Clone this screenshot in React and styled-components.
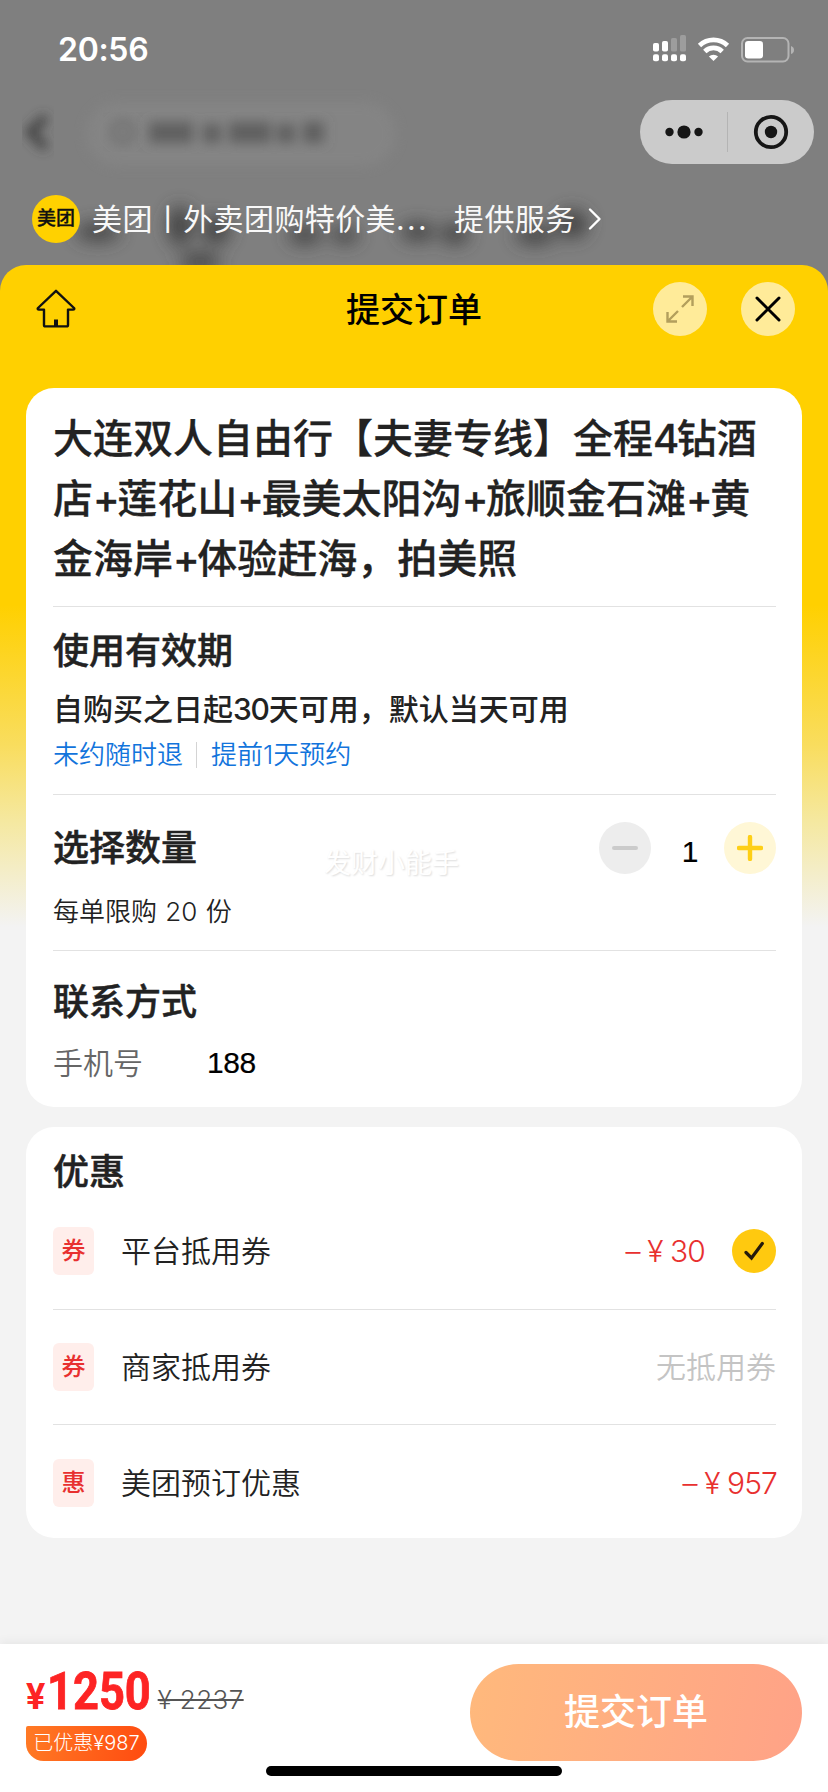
import React, { useState } from 'react'
import styled, { createGlobalStyle } from 'styled-components'

const coupons = [
  { id: 1, tag: '券', name: '平台抵用券', amount: '30', checked: true },
  { id: 2, tag: '券', name: '商家抵用券' },
  { id: 3, tag: '惠', name: '美团预订优惠', amount: '957' },
]

const App = () => {
  const [count, setCount] = useState(1)

  return (
    <>
      <GlobalStyle />
      <Page>
        <BlurredPage />
        <StatusBar>
          <Time>20:56</Time>
          <StatusIcons />
        </StatusBar>
        <CapsuleRow>
          <Capsule>
            <svg width="38" height="16" viewBox="0 0 38 16" fill="#161616">
              <circle cx="4.5" cy="8" r="4.2" />
              <circle cx="19" cy="8" r="6.6" />
              <circle cx="33.5" cy="8" r="4.2" />
            </svg>
            <CapsuleLine />
            <svg width="36" height="36" viewBox="0 0 36 36">
              <circle cx="18" cy="18" r="15.2" fill="none" stroke="#161616" strokeWidth="3.8" />
              <circle cx="18" cy="18" r="6.2" fill="#161616" />
            </svg>
          </Capsule>
        </CapsuleRow>
        <Provider>
          <Logo>美团</Logo>
          <ProviderName>美团丨外卖团购特价美<Dots>...</Dots></ProviderName>
          <span>提供服务</span>
          <svg width="14" height="24" viewBox="0 0 14 24" fill="none" stroke="#fff" strokeWidth="2.4">
            <path d="M2 2.5 L11.5 12 L2 21.5" strokeLinecap="round" strokeLinejoin="round" />
          </svg>
        </Provider>

        <Sheet>
          <Header>
            <HomeIcon />
            <HeaderTitle>提交订单</HeaderTitle>
            <HeaderButtons>
              <RoundButton>
                <svg width="30" height="30" viewBox="0 0 30 30" fill="none" stroke="#b39f5c" strokeWidth="2.4">
                  <path d="M18 2.5 H27.5 V12 M27 3 L17 13 M2.5 18 V27.5 H12 M3 27 L13 17" />
                </svg>
              </RoundButton>
              <RoundButton>
                <svg width="28" height="28" viewBox="0 0 28 28" fill="none" stroke="#000" strokeWidth="3">
                  <path d="M3 3 L25 25 M25 3 L3 25" strokeLinecap="round" />
                </svg>
              </RoundButton>
            </HeaderButtons>
          </Header>

          <Card>
            <ProductTitle>
              大连双人自由行【夫妻专线】全程<Narrow>4</Narrow>钻酒
              <br />
              店<Narrow>+</Narrow>莲花山<Narrow>+</Narrow>最美太阳沟<Narrow>+</Narrow>旅顺金石滩<Narrow>+</Narrow>黄
              <br />
              金海岸<Narrow>+</Narrow>体验赶海，拍美照
            </ProductTitle>
            <Section $height={188} $top={26}>
              <Heading>使用有效期</Heading>
              <Validity>自购买之日起<Days>30</Days>天可用，默认当天可用</Validity>
              <Rules>
                <span>未约随时退</span>
                <RuleLine />
                <span>提前1天预约</span>
              </Rules>
            </Section>
            <Section $height={156} $top={28}>
              <CountRow>
                <Heading>选择数量</Heading>
                <Watermark>发财小能手</Watermark>
                <Stepper>
                  <StepButton $color="#ededed" onClick={() => setCount(Math.max(1, count - 1))}>
                    <svg width="26" height="26" viewBox="0 0 26 26" stroke="#cbcbcb" strokeWidth="4">
                      <path d="M2 13 H24" strokeLinecap="round" />
                    </svg>
                  </StepButton>
                  <Count>{count}</Count>
                  <StepButton $color="#fff7d6" onClick={() => setCount(Math.min(20, count + 1))}>
                    <svg width="26" height="26" viewBox="0 0 26 26" stroke="#fecf16" strokeWidth="4.4">
                      <path d="M2 13 H24 M13 2 V24" strokeLinecap="round" />
                    </svg>
                  </StepButton>
                </Stepper>
              </CountRow>
              <Limit>每单限购 20 份</Limit>
            </Section>
            <Section $height={157} $top={33}>
              <Heading>联系方式</Heading>
              <Phone>
                <PhoneLabel>手机号</PhoneLabel>
                <PhoneValue>188</PhoneValue>
              </Phone>
            </Section>
          </Card>

          <DiscountCard>
            <Heading>优惠</Heading>
            <CouponList>
            {
              coupons.map((item) => (
                <CouponRow key={item.id}>
                  <Tag>{item.tag}</Tag>
                  <CouponName>{item.name}</CouponName>
                  { item.amount ? <Amount>–&nbsp;¥&nbsp;{item.amount}</Amount> : <NoCoupon>无抵用券</NoCoupon> }
                  { item.checked &&
                  <Check>
                    <svg width="22" height="22" viewBox="0 0 22 22" fill="none" stroke="#241a0c" strokeWidth="3.2">
                      <path d="M3 12.5 L8.5 18 L19.3 3.5" strokeLinecap="round" />
                    </svg>
                  </Check>
                  }
                </CouponRow>
              ))
            }
            </CouponList>
          </DiscountCard>

          <Footer>
            <FooterMain>
              <div>
                <PriceLine>
                  <Yen>¥</Yen>
                  <Price>1250</Price>
                  <OldPrice>¥ 2237</OldPrice>
                </PriceLine>
                <Saved>已优惠¥987</Saved>
              </div>
              <Submit>提交订单</Submit>
            </FooterMain>
            <HomeBar />
          </Footer>
        </Sheet>
      </Page>
    </>
  )
}

// the dimmed, out of focus page behind the sheet
const BlurredPage = () => (
  <Backdrop width="828" height="290" viewBox="0 0 828 290">
    <defs>
      <filter id="soft" x="-50%" y="-50%" width="200%" height="200%">
        <feGaussianBlur stdDeviation="6" />
      </filter>
      <filter id="softer" x="-50%" y="-50%" width="200%" height="200%">
        <feGaussianBlur stdDeviation="9" />
      </filter>
    </defs>
    <rect x="86" y="102" width="310" height="64" rx="32" fill="#848484" filter="url(#soft)" />
    <path d="M46 117 L30 132 L46 148" fill="none" stroke="#3c3c3c" strokeWidth="8" filter="url(#soft)" />
    <circle cx="123" cy="132" r="10" fill="none" stroke="#6c6c6c" strokeWidth="5" filter="url(#soft)" />
    <g fill="#606060" filter="url(#soft)">
      <rect x="149" y="122" width="44" height="21" />
      <rect x="203" y="124" width="18" height="19" />
      <rect x="229" y="122" width="42" height="21" />
      <rect x="277" y="124" width="18" height="19" />
      <rect x="303" y="122" width="21" height="21" />
    </g>
    <g fill="#424242" filter="url(#softer)">
      <ellipse cx="98" cy="232" rx="22" ry="9" />
      <ellipse cx="180" cy="226" rx="12" ry="20" />
      <ellipse cx="216" cy="230" rx="14" ry="14" />
      <ellipse cx="200" cy="262" rx="20" ry="9" />
      <ellipse cx="305" cy="235" rx="17" ry="9" />
      <ellipse cx="345" cy="235" rx="14" ry="8" />
      <ellipse cx="418" cy="232" rx="18" ry="9" />
      <ellipse cx="455" cy="234" rx="14" ry="10" />
      <ellipse cx="535" cy="235" rx="20" ry="9" />
      <ellipse cx="572" cy="224" rx="16" ry="14" />
    </g>
  </Backdrop>
)

const StatusIcons = () => (
  <svg width="144" height="30" viewBox="0 0 144 30">
    <g fill="#fff">
      <rect x="1" y="8" width="6" height="8.5" rx="1.8" />
      <rect x="10" y="6" width="6" height="10.5" rx="1.8" />
      <rect x="1" y="19.3" width="6" height="7" rx="2" />
      <rect x="10" y="19.3" width="6" height="7" rx="2" />
      <rect x="19" y="19.3" width="6" height="7" rx="2" />
      <rect x="28" y="19.3" width="6" height="7" rx="2" />
    </g>
    <g fill="#9d9d9d">
      <rect x="19" y="3" width="6" height="13.5" rx="1.6" />
      <rect x="28" y="0" width="6" height="16.5" rx="1.6" />
    </g>
    <g fill="none" stroke="#fff" strokeWidth="4.8">
      <path d="M47.5 10.5 A20.5 20.5 0 0 1 75.5 10.5" />
      <path d="M52.8 16.4 A12.6 12.6 0 0 1 70.2 16.4" />
    </g>
    <path d="M61.5 26 L56.9 21.6 A6.6 6.6 0 0 1 66.1 21.6 Z" fill="#fff" />
    <rect x="90" y="3" width="46.5" height="23.5" rx="5.5" fill="none" stroke="#b4b4b4" strokeWidth="2" />
    <rect x="93" y="6" width="18" height="17.4" rx="3.2" fill="#fff" />
    <path d="M139 11 Q142 12 142 15 Q142 18 139 19 Z" fill="#b4b4b4" />
  </svg>
)

const HomeIcon = () => (
  <HomeSvg width="40" height="40" viewBox="0 0 40 40" fill="none" stroke="#111" strokeWidth="2.4">
    <path d="M20 1.8 L38 19 Q39 20.6 37 20.6 H32 V36 Q32 37.4 30.6 37.4 H9.4 Q8 37.4 8 36 V20.6 H3 Q1 20.6 2 19 Z" strokeLinejoin="round" />
    <path d="M20 30.5 V37" strokeWidth="4" />
  </HomeSvg>
)

const GlobalStyle = createGlobalStyle`
  body {
    margin: 0;
    font-family: Inter, "Noto Sans CJK SC", sans-serif;
    line-height: 1.2;
    color: #222;
  }
  * {
    box-sizing: border-box;
  }
  svg {
    display: block;
    flex: none;
  }
`;

const Page = styled.div`
  position: relative;
  width: 828px;
  height: 1792px;
  display: flex;
  flex-direction: column;
  background: #7f7f7f;
  overflow: hidden;
`;

const Backdrop = styled.svg`
  position: absolute;
  top: 0;
  left: 0;
`;

const StatusBar = styled.div`
  position: relative;
  height: 100px;
  display: flex;
  align-items: center;
  justify-content: space-between;
  padding: 0 32px 0 58px;
  color: #fff;
`;

const Time = styled.span`
  padding-top: 1px;
  font-size: 32px;
  font-weight: 600;
  letter-spacing: -0.3px;
`;

const CapsuleRow = styled.div`
  position: relative;
  display: flex;
  justify-content: flex-end;
  padding-right: 14px;
`;

const Capsule = styled.div`
  width: 174px;
  height: 64px;
  border-radius: 32px;
  background: #cbcbcb;
  display: flex;
  align-items: center;
  justify-content: space-between;
  padding: 0 25px;
`;

const CapsuleLine = styled.i`
  width: 1px;
  height: 40px;
  margin-left: 11px;
  margin-right: 12px;
  background: #b4b4b4;
`;

const Provider = styled.div`
  position: relative;
  height: 101px;
  padding: 31px 0 22px 32px;
  display: flex;
  align-items: center;
  color: #f8f8f8;
  font-size: 30px;
  letter-spacing: 0.4px;

  svg {
    margin-left: 12px;
  }
`;

const Logo = styled.span`
  width: 48px;
  height: 48px;
  border-radius: 50%;
  background: #ffd100;
  color: #111;
  font-size: 19px;
  line-height: 47px;
  font-weight: 500;
  letter-spacing: 0;
  text-align: center;
  -webkit-text-stroke: 0.3px #111;
`;

const ProviderName = styled.span`
  width: 374px;
  padding-left: 12px;
  white-space: nowrap;
`;

const Dots = styled.span`
  letter-spacing: 2.4px;
`;

const Sheet = styled.div`
  position: relative;
  flex: 1;
  display: flex;
  flex-direction: column;
  align-items: center;
  border-radius: 26px 26px 0 0;
  background: linear-gradient(#ffd000 340px, #f9dd5e 480px, #f5e89f 555px, #f3f3f3 662px);
`;

const Header = styled.div`
  width: 100%;
  height: 123px;
  padding: 0 33px 35px;
  display: grid;
  grid-template-columns: 1fr auto 1fr;
  align-items: center;
`;

const HomeSvg = styled.svg`
  margin-left: 3px;
`;

const HeaderTitle = styled.h1`
  margin: 0;
  padding-top: 2px;
  font-size: 34px;
  font-weight: 500;
  color: #000;
`;

const HeaderButtons = styled.div`
  display: flex;
  justify-content: flex-end;
  gap: 34px;
`;

const RoundButton = styled.button`
  width: 54px;
  height: 54px;
  padding: 0;
  border: none;
  border-radius: 50%;
  background: #ffeb99;
  display: flex;
  align-items: center;
  justify-content: center;
`;

const Card = styled.div`
  width: 776px;
  height: 719px;
  padding: 21px 26px 0 27px;
  border-radius: 28px;
  background: #fff;
`;

const ProductTitle = styled.h2`
  margin: 0;
  height: 197px;
  font-size: 40px;
  line-height: 60px;
  font-weight: 500;
  white-space: nowrap;
  -webkit-text-stroke: 0.3px #222;
`;

const Narrow = styled.span`
  letter-spacing: -2.4px;
`;

const Section = styled.section`
  height: ${(props) => props.$height}px;
  padding-top: ${(props) => props.$top - 1}px;
  border-top: 1px solid #e2e2e2;
`;

const Heading = styled.h3`
  margin: 0;
  font-size: 36px;
  line-height: 38px;
  font-weight: 500;
  -webkit-text-stroke: 0.5px #222;
`;

const Validity = styled.p`
  margin: 19px 0 0;
  font-size: 30px;
  line-height: 40px;
  font-weight: 500;
`;

const Days = styled.span`
  letter-spacing: -1.2px;
`;

const Rules = styled.div`
  margin-top: 9px;
  display: flex;
  align-items: center;
  font-size: 26px;
  line-height: 34px;
  font-weight: 350;
  color: #1274dc;
`;

const RuleLine = styled.i`
  width: 1px;
  height: 26px;
  margin: 0 14px 0 13px;
  background: #d4d4d4;
`;

const CountRow = styled.div`
  height: 52px;
  display: flex;
  align-items: center;
  justify-content: space-between;
`;

const Watermark = styled.span`
  margin: 33px 0 0 -13px;
  font-size: 27px;
  color: #fff;
  text-shadow: 1px 1px 2px #dcdcdc;
`;

const Stepper = styled.div`
  display: flex;
  align-items: center;
`;

const StepButton = styled.button`
  width: 52px;
  height: 52px;
  padding: 0;
  border: none;
  border-radius: 50%;
  background: ${(props) => props.$color};
  display: flex;
  align-items: center;
  justify-content: center;
`;

const Count = styled.span`
  width: 73px;
  padding: 8px 0 0 5px;
  text-align: center;
  font-family: "Liberation Sans", sans-serif;
  font-size: 30px;
  color: #000;
  -webkit-text-stroke: 0.2px #000;
`;

const Limit = styled.p`
  margin: 20px 0 0;
  font-size: 26px;
  line-height: 36px;
  font-weight: 350;
  word-spacing: 1px;
`;

const Phone = styled.div`
  margin-top: 22px;
  display: flex;
  font-size: 30px;
  line-height: 40px;
`;

const PhoneLabel = styled.span`
  width: 154px;
  font-weight: 350;
  color: #666;
`;

const PhoneValue = styled.span`
  font-family: "Liberation Sans", sans-serif;
  letter-spacing: -0.4px;
  color: #000;
  -webkit-text-stroke: 0.2px #000;
`;

const DiscountCard = styled.div`
  width: 776px;
  height: 411px;
  margin-top: 20px;
  padding: 26px 26px 0 27px;
  border-radius: 28px;
  background: #fff;
`;

const CouponList = styled.div`
  margin-top: 2px;
`;

const CouponRow = styled.div`
  height: 116px;
  display: flex;
  align-items: center;

  & + & {
    height: 115px;
    border-top: 1px solid #e2e2e2;
  }

  &:last-child {
    height: 117px;
  }
`;

const Tag = styled.span`
  width: 41px;
  height: 48px;
  border-radius: 6px;
  background: #ffeeeb;
  color: #e8302f;
  font-size: 24px;
  line-height: 47px;
  font-weight: 500;
  text-align: center;
`;

const CouponName = styled.span`
  flex: 1;
  margin-left: 27px;
  font-size: 30px;
  line-height: 40px;
  font-weight: 350;
`;

const Amount = styled.span`
  margin-right: -1px;
  font-size: 30px;
  font-weight: 350;
  letter-spacing: -0.9px;
  font-feature-settings: "calt" 0;
  color: #e8302f;
`;

const NoCoupon = styled.span`
  font-size: 30px;
  font-weight: 350;
  color: #c4c4c4;
`;

const Check = styled.span`
  width: 44px;
  height: 44px;
  margin-left: 28px;
  border-radius: 50%;
  background: #ffc90f;
  display: flex;
  align-items: center;
  justify-content: center;
`;

const Footer = styled.footer`
  width: 100%;
  height: 148px;
  margin-top: auto;
  background: #fff;
  box-shadow: 0 -2px 10px rgba(0, 0, 0, 0.06);
`;

const FooterMain = styled.div`
  height: 122px;
  padding: 20px 26px 0;
  display: flex;
  justify-content: space-between;
`;

const PriceLine = styled.div`
  height: 62px;
  display: flex;
  align-items: baseline;
  line-height: 56px;
`;

const Yen = styled.span`
  font-family: Roboto, sans-serif;
  font-size: 36px;
  font-weight: 700;
  color: #fd2424;
`;

const Price = styled.span`
  margin: 0 -15px 0 2px;
  font-family: Roboto, sans-serif;
  font-size: 52px;
  font-weight: 700;
  color: #fd2424;
  transform: scaleX(0.87);
  transform-origin: left;
  -webkit-text-stroke: 0.8px #fd2424;
`;

const OldPrice = styled.span`
  margin-left: 6px;
  font-size: 26px;
  font-weight: 300;
  letter-spacing: 0.4px;
  color: #555;
  text-decoration: line-through;
`;

const Saved = styled.span`
  display: inline-block;
  width: 121px;
  height: 35px;
  border-radius: 2px 18px 18px 18px;
  background: linear-gradient(100deg, #ff7a25, #ff4b10);
  color: #fff;
  font-size: 20px;
  font-weight: 300;
  line-height: 35px;
  text-align: center;
`;

const Submit = styled.button`
  width: 332px;
  height: 97px;
  padding: 1px 0 0;
  border: none;
  border-radius: 49px;
  background: linear-gradient(100deg, #ffb97c, #ffa287);
  color: #fff;
  font-family: inherit;
  font-size: 36px;
  line-height: 1.2;
  font-weight: 500;
`;

const HomeBar = styled.div`
  width: 296px;
  height: 10px;
  margin: 0 auto;
  border-radius: 5px;
  background: #000;
`;

export default App
